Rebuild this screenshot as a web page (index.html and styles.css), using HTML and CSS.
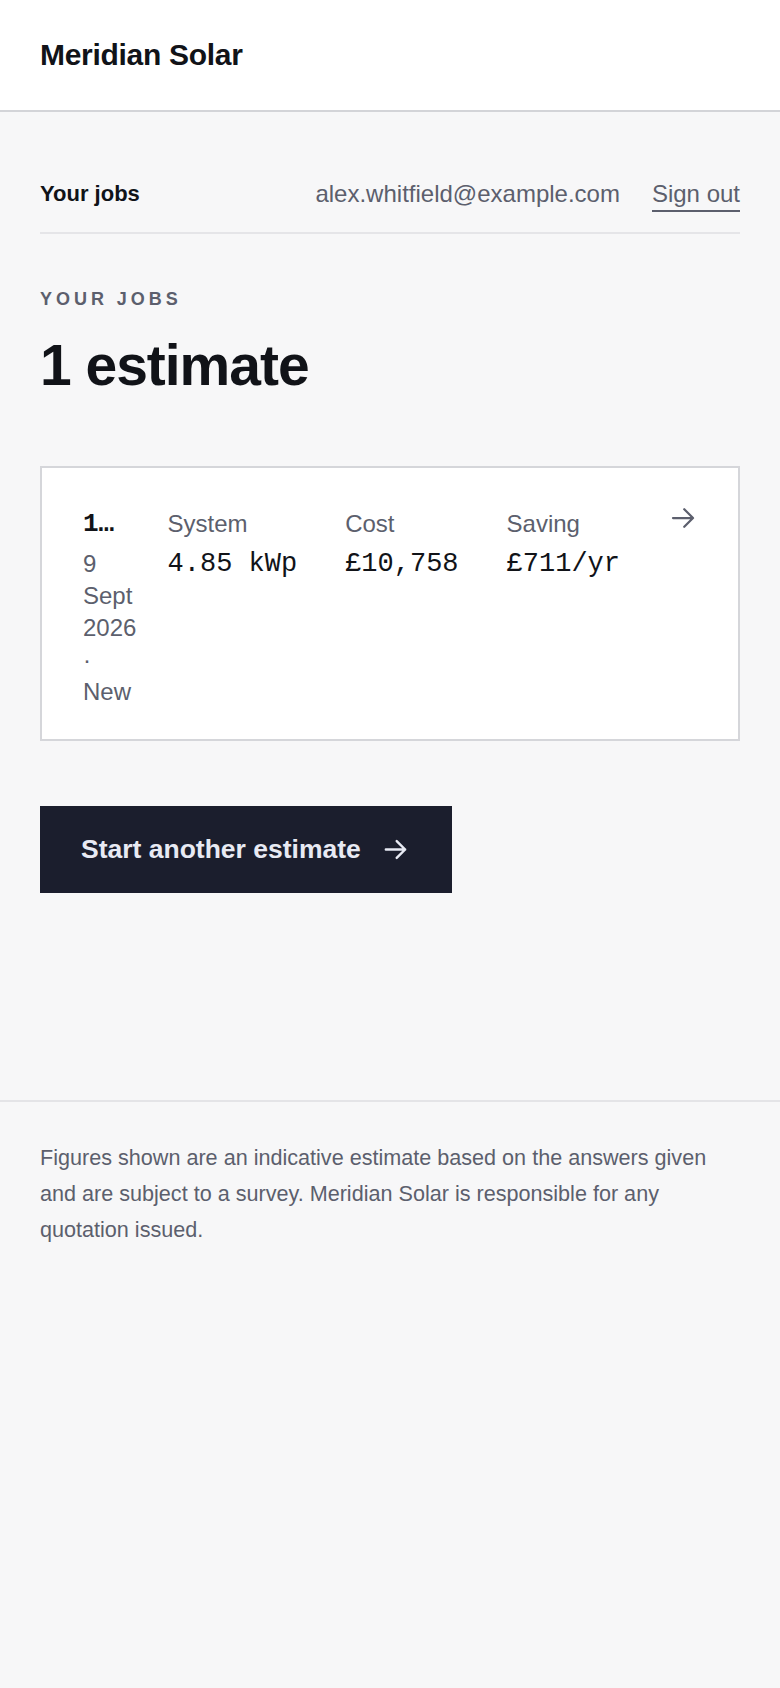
FILE: index.html
```html
<!DOCTYPE html>
<html lang="en">
<head>
    <meta charset="UTF-8">
    <meta name="viewport" content="width=device-width, initial-scale=1.0">
    <title>Your jobs - Meridian Solar</title>
    <link rel="stylesheet" href="styles.css">
</head>
<body>
    <header class="site-header">
        <div class="brand">Meridian Solar</div>
    </header>

    <main class="page">
        <nav class="account-bar">
            <span class="account-title">Your jobs</span>
            <div class="account-meta">
                <span class="account-email">alex.whitfield@example.com</span>
                <a class="sign-out" href="#">Sign out</a>
            </div>
        </nav>

        <p class="eyebrow">Your jobs</p>
        <h1 class="page-title">1 estimate</h1>

        <a class="job-card" href="#">
            <div class="job-id">
                <div class="job-ref">1042-MS</div>
                <div class="job-meta">9 Sept 2026 · New</div>
            </div>
            <div class="job-stat">
                <span class="stat-label">System</span>
                <span class="stat-value">4.85 kWp</span>
            </div>
            <div class="job-stat">
                <span class="stat-label">Cost</span>
                <span class="stat-value">£10,758</span>
            </div>
            <div class="job-stat">
                <span class="stat-label">Saving</span>
                <span class="stat-value">£711/yr</span>
            </div>
            <svg class="job-arrow" viewBox="0 0 24 24" fill="none" stroke="currentColor" stroke-width="1.8" stroke-linecap="round" stroke-linejoin="round">
                <path d="M4 12h16M13 5l7 7-7 7"/>
            </svg>
        </a>

        <a class="primary-btn" href="#">
            Start another estimate
            <svg class="btn-arrow" viewBox="0 0 24 24" fill="none" stroke="currentColor" stroke-width="2" stroke-linecap="round" stroke-linejoin="round">
                <path d="M4 12h16M13 5l7 7-7 7"/>
            </svg>
        </a>
    </main>

    <footer class="site-footer">
        <p>Figures shown are an indicative estimate based on the answers given and are subject to a survey. Meridian Solar is responsible for any quotation issued.</p>
    </footer>
</body>
</html>
```

FILE: styles.css
```css
body {
    margin: 0;
    background: #f7f7f8;
    color: #111318;
    font-family: "Liberation Sans", Arial, sans-serif;
}

.site-header {
    background: #ffffff;
    height: 110px;
    border-bottom: 2px solid #d3d4d8;
    display: flex;
    align-items: center;
    padding: 0 40px;
}

.brand {
    font-size: 30px;
    font-weight: 700;
    letter-spacing: -0.3px;
}

.page {
    padding: 0 40px 207px;
}

.account-bar {
    display: flex;
    justify-content: space-between;
    align-items: flex-start;
    padding: 66px 0 20px;
    border-bottom: 2px solid #e5e5e8;
}

.account-title {
    font-size: 22px;
    font-weight: 700;
    line-height: 32px;
}

.account-meta {
    display: flex;
    gap: 32px;
    font-size: 24px;
    line-height: 32px;
    color: #5c5f6d;
}

.sign-out {
    color: #5c5f6d;
    text-decoration: none;
    border-bottom: 2px solid #5c5f6d;
}

.eyebrow {
    margin: 53px 0 0;
    font-size: 18px;
    line-height: 24px;
    font-weight: 700;
    letter-spacing: 0.22em;
    text-transform: uppercase;
    color: #5c5f6d;
}

.page-title {
    margin: 23px 0 0;
    font-size: 57px;
    line-height: 63px;
    letter-spacing: -0.018em;
    font-weight: 700;
}

.job-card {
    margin-top: 69px;
    display: grid;
    grid-template-columns: minmax(0, 1fr) auto auto auto auto;
    column-gap: 48px;
    align-items: start;
    padding: 40px 40px 31px 41px;
    background: #ffffff;
    border: 2px solid #d5d6da;
    color: inherit;
    text-decoration: none;
}

.job-ref {
    font-family: "Liberation Mono", "Courier New", monospace;
    font-size: 26px;
    font-weight: 700;
    line-height: 32px;
    white-space: nowrap;
    overflow: hidden;
    text-overflow: ellipsis;
}

.job-meta {
    margin-top: 8px;
    font-size: 24px;
    line-height: 32px;
    color: #5c5f6d;
}

.job-stat {
    display: flex;
    flex-direction: column;
    gap: 8px;
}

.stat-label {
    font-size: 24px;
    line-height: 32px;
    color: #5c5f6d;
}

.stat-value {
    font-family: "Liberation Mono", "Courier New", monospace;
    font-size: 27px;
    line-height: 32px;
    white-space: nowrap;
}

.job-arrow {
    width: 30px;
    height: 30px;
    color: #5c5f6d;
    margin-top: -5px;
}

.primary-btn {
    margin-top: 65px;
    display: inline-flex;
    align-items: center;
    gap: 20px;
    height: 87px;
    padding: 0 42px 0 41px;
    background: #1b1e2d;
    color: #e8eaf3;
    font-size: 26.5px;
    font-weight: 700;
    text-decoration: none;
}

.btn-arrow {
    width: 29px;
    height: 29px;
}

.site-footer {
    border-top: 2px solid #e4e4e7;
    padding: 38px 40px 60px;
}

.site-footer p {
    margin: 0;
    font-size: 21.6px;
    line-height: 36px;
    color: #5c5f6d;
}
```
